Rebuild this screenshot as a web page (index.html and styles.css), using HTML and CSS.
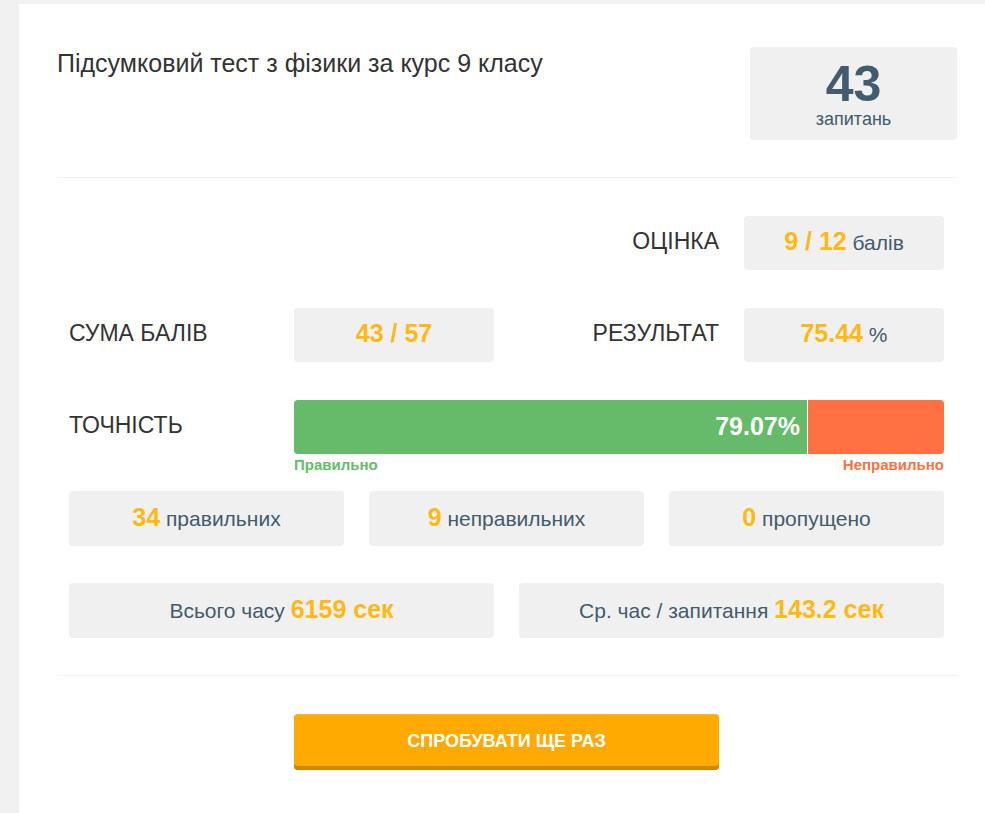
FILE: index.html
```html
<!DOCTYPE html>
<html lang="uk">
<head>
<meta charset="utf-8">
<meta name="viewport" content="width=device-width, initial-scale=1">
<title>Підсумковий тест з фізики за курс 9 класу</title>
<link rel="stylesheet" href="styles.css">
</head>
<body>
<main class="card">
  <header class="head">
    <h1 class="title">Підсумковий тест з фізики за курс 9 класу</h1>
    <div class="count"><strong class="count-number">43</strong><span class="count-label">запитань</span></div>
  </header>
  <section class="results">
    <div class="grid">
      <span class="label label-right grade">ОЦІНКА</span>
      <div class="box"><p><b>9 / 12</b> балів</p></div>
      <span class="label">СУМА БАЛІВ</span>
      <div class="box"><p><b>43 / 57</b></p></div>
      <span class="label label-right">РЕЗУЛЬТАТ</span>
      <div class="box"><p><b>75.44</b> %</p></div>
    </div>
    <div class="grid accuracy">
      <span class="label">ТОЧНІСТЬ</span>
      <div class="meter">
        <div class="bar"><div class="bar-right" style="width: 79.07%">79.07%</div><div class="bar-wrong"></div></div>
        <div class="legend"><span class="legend-right">Правильно</span><span class="legend-wrong">Неправильно</span></div>
      </div>
    </div>
    <div class="row">
      <div class="box"><p><b>34</b> правильних</p></div>
      <div class="box"><p><b>9</b> неправильних</p></div>
      <div class="box"><p><b>0</b> пропущено</p></div>
    </div>
    <div class="row times">
      <div class="box"><p>Всього часу <b>6159 сек</b></p></div>
      <div class="box"><p>Ср. час / запитання <b>143.2 сек</b></p></div>
    </div>
  </section>
  <footer class="actions"><button class="retry" type="button">СПРОБУВАТИ ЩЕ РАЗ</button></footer>
</main>
</body>
</html>
```
FILE: styles.css
```css
* { box-sizing: border-box; }

body {
  margin: 0;
  padding: 4px 0 0 19px;
  background: #f1f1f1;
  color: #333;
  font-family: "Liberation Sans", Arial, sans-serif;
}

.card {
  min-height: calc(100vh - 4px);
  padding: 43px 28px 43px 38px;
  background: #fff;
}

.head {
  display: flex;
  justify-content: space-between;
  align-items: flex-start;
  padding-bottom: 37px;
  border-bottom: 1px solid #f1f1f1;
}

.title {
  margin: 0;
  font-size: 25px;
  line-height: 32px;
  font-weight: 400;
}

.count {
  display: flex;
  flex-direction: column;
  width: 23%;
  padding: 11px 0 12px;
  border-radius: 4px;
  background: #f0f0f0;
  color: #425b6d;
  text-align: center;
}

.count-number { font-size: 50px; line-height: 52px; }
.count-label { font-size: 18px; line-height: 18px; }

.results {
  padding: 38px 13px 37px 12px;
  border-bottom: 1px solid #f1f1f1;
}

.grid {
  display: grid;
  grid-template-columns: repeat(2, 1fr 200px);
  gap: 38px 25px;
}

.label { font-size: 23px; line-height: 50px; }
.label-right { text-align: right; }
.grade { grid-column: 3; }

.box {
  height: 54px;
  border-radius: 4px;
  background: #f0f0f0;
  color: #425b6d;
  font-size: 21px;
  text-align: center;
}

.box p { margin: 0; line-height: 50px; }

.box b {
  color: #ffb915;
  font-size: 25px;
}

.accuracy { margin-top: 38px; }
.meter { grid-column: 2 / -1; }

.bar {
  display: flex;
  height: 54px;
  overflow: hidden;
  border-radius: 4px;
}

.bar-right {
  padding-right: 7px;
  border-right: 1px solid #fff;
  background: #66bb6a;
  color: #fff;
  font-size: 25px;
  font-weight: 700;
  line-height: 52px;
  text-align: right;
}

.bar-wrong { flex: 1; background: #ff7043; }

.legend {
  display: flex;
  justify-content: space-between;
  font-size: 15px;
  font-weight: 700;
  line-height: 22px;
}

.legend-right { color: #66bb6a; }
.legend-wrong { color: #ff7043; }

.row {
  display: flex;
  gap: 25px;
  margin-top: 15px;
}

.row .box { flex: 1; height: 55px; }
.row .box p { line-height: 52px; }
.times { margin-top: 37px; }

.actions {
  display: flex;
  justify-content: center;
  padding: 38px 13px 0 12px;
}

.retry {
  width: 425px;
  max-width: 100%;
  height: 56px;
  padding: 0 0 2px;
  border: 0;
  border-radius: 4px;
  background: #ffaa00;
  box-shadow: inset 0 -4px #cc8800, inset 0 1px #ffb733;
  color: #fff;
  font: 700 18px/50px "Liberation Sans", Arial, sans-serif;
}
```
